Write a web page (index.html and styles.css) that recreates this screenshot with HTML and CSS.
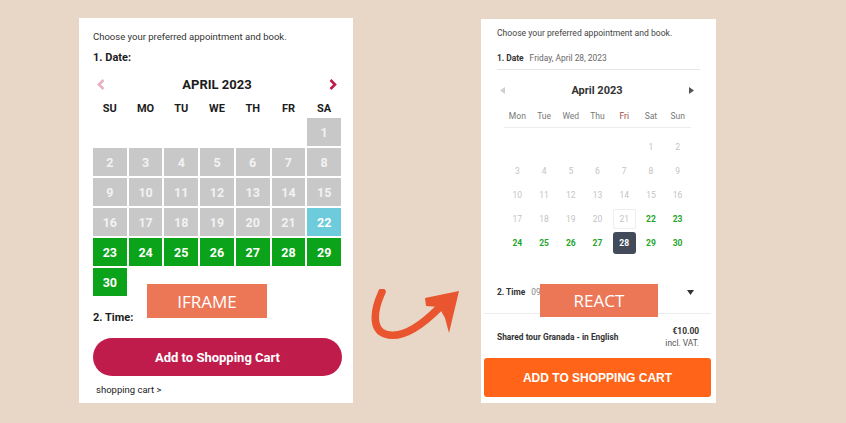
FILE: index.html
```html
<!DOCTYPE html>
<html lang="en">
<head>
<meta charset="utf-8">
<title>Iframe vs React booking widget</title>
<link rel="stylesheet" href="styles.css">
</head>
<body>
<main class="stage">
  <section class="panel iframe-panel">
    <p class="intro">Choose your preferred appointment and book.</p>
    <p class="step">1. Date:</p>
    <div class="month-nav">
      <svg class="chev" width="8" height="11" viewBox="0 0 8 11"><polyline points="6.5,1 2,5.5 6.5,10" fill="none" stroke="#eab0c2" stroke-width="2.6"/></svg>
      <span class="month">APRIL 2023</span>
      <svg class="chev" width="8" height="11" viewBox="0 0 8 11"><polyline points="1.5,1 6,5.5 1.5,10" fill="none" stroke="#c21b48" stroke-width="2.6"/></svg>
    </div>
    <div class="dow-grid">
      <span>SU</span><span>MO</span><span>TU</span><span>WE</span><span>TH</span><span>FR</span><span>SA</span>
    </div>
    <div class="day-grid">
      <span class="blank"></span><span class="blank"></span><span class="blank"></span><span class="blank"></span><span class="blank"></span><span class="blank"></span>
      <span class="d off">1</span>
      <span class="d off">2</span><span class="d off">3</span><span class="d off">4</span><span class="d off">5</span><span class="d off">6</span><span class="d off">7</span><span class="d off">8</span>
      <span class="d off">9</span><span class="d off">10</span><span class="d off">11</span><span class="d off">12</span><span class="d off">13</span><span class="d off">14</span><span class="d off">15</span>
      <span class="d off">16</span><span class="d off">17</span><span class="d off">18</span><span class="d off">19</span><span class="d off">20</span><span class="d off">21</span><span class="d today">22</span>
      <span class="d free">23</span><span class="d free">24</span><span class="d free">25</span><span class="d free">26</span><span class="d free">27</span><span class="d free">28</span><span class="d free">29</span>
      <span class="d free">30</span>
    </div>
    <p class="step time">2. Time:</p>
    <button class="cart-btn">Add to Shopping Cart</button>
    <a class="cart-link">shopping cart &gt;</a>
    <div class="tag tag-iframe">IFRAME</div>
  </section>

  <svg class="swoosh" width="100" height="70" viewBox="0 0 100 70">
    <path d="M 13 3 C 5 20, 2 40, 16 45 C 33 51, 53 36, 70 19" fill="none" stroke="#e8552f" stroke-width="7.5" stroke-linecap="round"/>
    <polygon points="56,9 90,2 80,44 76,29 70,18 57,17" fill="#e8552f"/>
  </svg>

  <section class="panel react-panel">
    <div class="r-body">
      <p class="r-intro">Choose your preferred appointment and book.</p>
      <p class="r-date"><b>1. Date</b><span>Friday, April 28, 2023</span></p>
      <div class="r-month">
        <svg width="5" height="7" viewBox="0 0 5 7"><polygon points="5,0 0,3.5 5,7" fill="#cfcfcf"/></svg>
        <span>April 2023</span>
        <svg width="5" height="7" viewBox="0 0 5 7"><polygon points="0,0 5,3.5 0,7" fill="#555"/></svg>
      </div>
      <div class="r-cal">
        <div class="r-dow"><span>Mon</span><span>Tue</span><span>Wed</span><span>Thu</span><span class="fri">Fri</span><span>Sat</span><span>Sun</span></div>
        <div class="r-days">
          <span></span><span></span><span></span><span></span><span></span><span class="g"><i>1</i></span><span class="g"><i>2</i></span>
          <span class="g"><i>3</i></span><span class="g"><i>4</i></span><span class="g"><i>5</i></span><span class="g"><i>6</i></span><span class="g"><i>7</i></span><span class="g"><i>8</i></span><span class="g"><i>9</i></span>
          <span class="g"><i>10</i></span><span class="g"><i>11</i></span><span class="g"><i>12</i></span><span class="g"><i>13</i></span><span class="g"><i>14</i></span><span class="g"><i>15</i></span><span class="g"><i>16</i></span>
          <span class="g"><i>17</i></span><span class="g"><i>18</i></span><span class="g"><i>19</i></span><span class="g"><i>20</i></span><span class="g now"><i>21</i></span><span class="ok"><i>22</i></span><span class="ok"><i>23</i></span>
          <span class="ok"><i>24</i></span><span class="ok"><i>25</i></span><span class="ok"><i>26</i></span><span class="ok"><i>27</i></span><span class="sel"><i>28</i></span><span class="ok"><i>29</i></span><span class="ok"><i>30</i></span>
        </div>
      </div>
      <div class="r-time">
        <p><b>2. Time</b><span>09:00</span></p>
        <svg width="7" height="5" viewBox="0 0 7 5"><polygon points="0,0 7,0 3.5,5" fill="#333"/></svg>
      </div>
    </div>
    <div class="r-foot">
      <div class="r-item">
        <span class="r-name">Shared tour Granada - in English</span>
        <div class="r-price"><b>€10.00</b><span>incl. VAT.</span></div>
      </div>
    </div>
    <button class="r-btn">ADD TO SHOPPING CART</button>
    <div class="tag tag-react">REACT</div>
  </section>
</main>
</body>
</html>
```

FILE: styles.css
```css
* { box-sizing: border-box; }
html, body { margin: 0; padding: 0; }
body {
  width: 846px;
  height: 423px;
  background: #e8d7c7;
  overflow: hidden;
  font-family: Roboto, "Liberation Sans", sans-serif;
}
p { margin: 0; }

.stage {
  position: relative;
  display: flex;
  align-items: flex-start;
  gap: 128px;
  padding: 18px 0 0 79px;
}

.panel {
  position: relative;
  background: #fff;
  flex: none;
}

/* ---------- iframe (left) ---------- */
.iframe-panel {
  width: 274px;
  height: 385px;
  padding: 13px 11px 0 14px;
}
.intro {
  font-size: 9.5px;
  line-height: 12px;
  color: #333;
}
.step {
  margin-top: 8px;
  font-size: 11px;
  line-height: 14px;
  font-weight: 700;
  color: #1c1c1c;
}
.month-nav {
  width: 248px;
  height: 20px;
  margin-top: 9px;
  display: flex;
  align-items: center;
  justify-content: space-between;
  padding: 0 4px 0 4px;
}
.month {
  font-size: 13px;
  font-weight: 700;
  color: #1c1c1c;
}
.dow-grid, .day-grid {
  width: 248px;
  display: grid;
  grid-template-columns: repeat(7, 1fr);
  column-gap: 2px;
}
.dow-grid {
  margin-top: 6px;
  height: 16px;
  align-items: center;
  text-align: center;
  font-size: 11px;
  font-weight: 700;
  color: #1c1c1c;
}
.day-grid {
  margin-top: 2px;
  grid-auto-rows: 28px;
  row-gap: 2px;
}
.d {
  display: flex;
  align-items: center;
  justify-content: center;
  font-size: 12.5px;
  font-weight: 700;
  color: #fff;
}
.d.off { background: #c8c8c8; color: #f2f2f2; }
.d.today { background: #6dcbdb; color: #fff; }
.d.free { background: #0ba319; color: #fff; }
.step.time { margin-top: 15px; }
.cart-btn {
  display: block;
  margin-top: 13px;
  width: 249px;
  height: 38px;
  border: none;
  border-radius: 19px;
  background: #c01c4b;
  color: #fff;
  font-family: Roboto, sans-serif;
  font-size: 13px;
  font-weight: 700;
}
.cart-link {
  display: block;
  margin: 8px 0 0 3px;
  font-size: 9.5px;
  line-height: 12px;
  color: #222;
}

/* ---------- overlay tags ---------- */
.tag {
  position: absolute;
  display: flex;
  align-items: center;
  justify-content: center;
  background: #ec7757;
  color: #fff;
  font-family: "Open Sans", sans-serif;
  font-size: 17px;
  font-weight: 400;
}
.tag-iframe { left: 68px; top: 266px; width: 120px; height: 34px; }
.tag-react { left: 59px; top: 265px; width: 118px; height: 33px; }

/* ---------- arrow ---------- */
.swoosh {
  position: absolute;
  left: 369px;
  top: 289px;
}

/* ---------- react (right) ---------- */
.react-panel {
  width: 235px;
  height: 384px;
  margin-top: 1px;
  padding-top: 8px;
}
.r-body { padding: 0 16px; }
.r-intro {
  font-size: 8.6px;
  line-height: 12px;
  color: #444;
}
.r-date {
  margin-top: 13px;
  padding-bottom: 5px;
  border-bottom: 1px solid #e6e6e6;
  font-size: 8.4px;
  line-height: 12px;
  color: #666;
}
.r-date b, .r-time b { color: #333; font-weight: 700; margin-right: 6px; }
.r-month {
  margin-top: 10px;
  height: 20px;
  display: flex;
  align-items: center;
  justify-content: space-between;
  padding: 0 6px 0 3px;
}
.r-month span {
  font-size: 11px;
  font-weight: 700;
  color: #333;
}
.r-cal {
  width: 187px;
  margin: 8px 0 0 7px;
}
.r-dow, .r-days {
  display: grid;
  grid-template-columns: repeat(7, 1fr);
}
.r-dow {
  height: 20px;
  padding-bottom: 4px;
  border-bottom: 1px solid #ececec;
  align-items: center;
  text-align: center;
  font-size: 8.5px;
  color: #777;
}
.r-dow .fri { color: #9e463f; }
.r-days {
  margin-top: 7px;
  grid-auto-rows: 24px;
}
.r-days span {
  display: flex;
  align-items: center;
  justify-content: center;
}
.r-days i {
  font-style: normal;
  display: flex;
  align-items: center;
  justify-content: center;
  width: 23px;
  height: 20px;
  font-size: 8.5px;
}
.r-days .g i { color: #c4c4c4; }
.r-days .now i { border: 1px solid #eeeeee; border-radius: 2px; }
.r-days .ok i { color: #1fa52b; font-weight: 700; }
.r-days .sel i {
  height: 22px;
  background: #434b5b;
  border-radius: 3px;
  color: #fff;
  font-weight: 700;
}
.r-time {
  margin-top: 30px;
  height: 28px;
  display: flex;
  justify-content: space-between;
  padding-right: 6px;
  font-size: 8.4px;
  line-height: 14px;
  color: #888;
}
.r-time svg { margin-top: 5px; }
.r-foot {
  margin: 0 5px 0 3px;
  border-top: 1px solid #ececec;
  padding: 11px 12px 0 13px;
}
.r-item {
  display: flex;
  justify-content: space-between;
  align-items: center;
}
.r-name {
  font-size: 8.4px;
  font-weight: 700;
  color: #333;
}
.r-price {
  display: flex;
  flex-direction: column;
  align-items: flex-end;
  font-size: 8.4px;
  line-height: 12px;
  color: #555;
}
.r-price b { color: #333; }
.r-btn {
  display: block;
  margin: 9px 0 0 3px;
  width: 227px;
  height: 39px;
  border: none;
  border-radius: 3px;
  background: #ff6419;
  color: #fff;
  font-family: "Liberation Sans", Arial, sans-serif;
  font-size: 12px;
  font-weight: 700;
}
```
